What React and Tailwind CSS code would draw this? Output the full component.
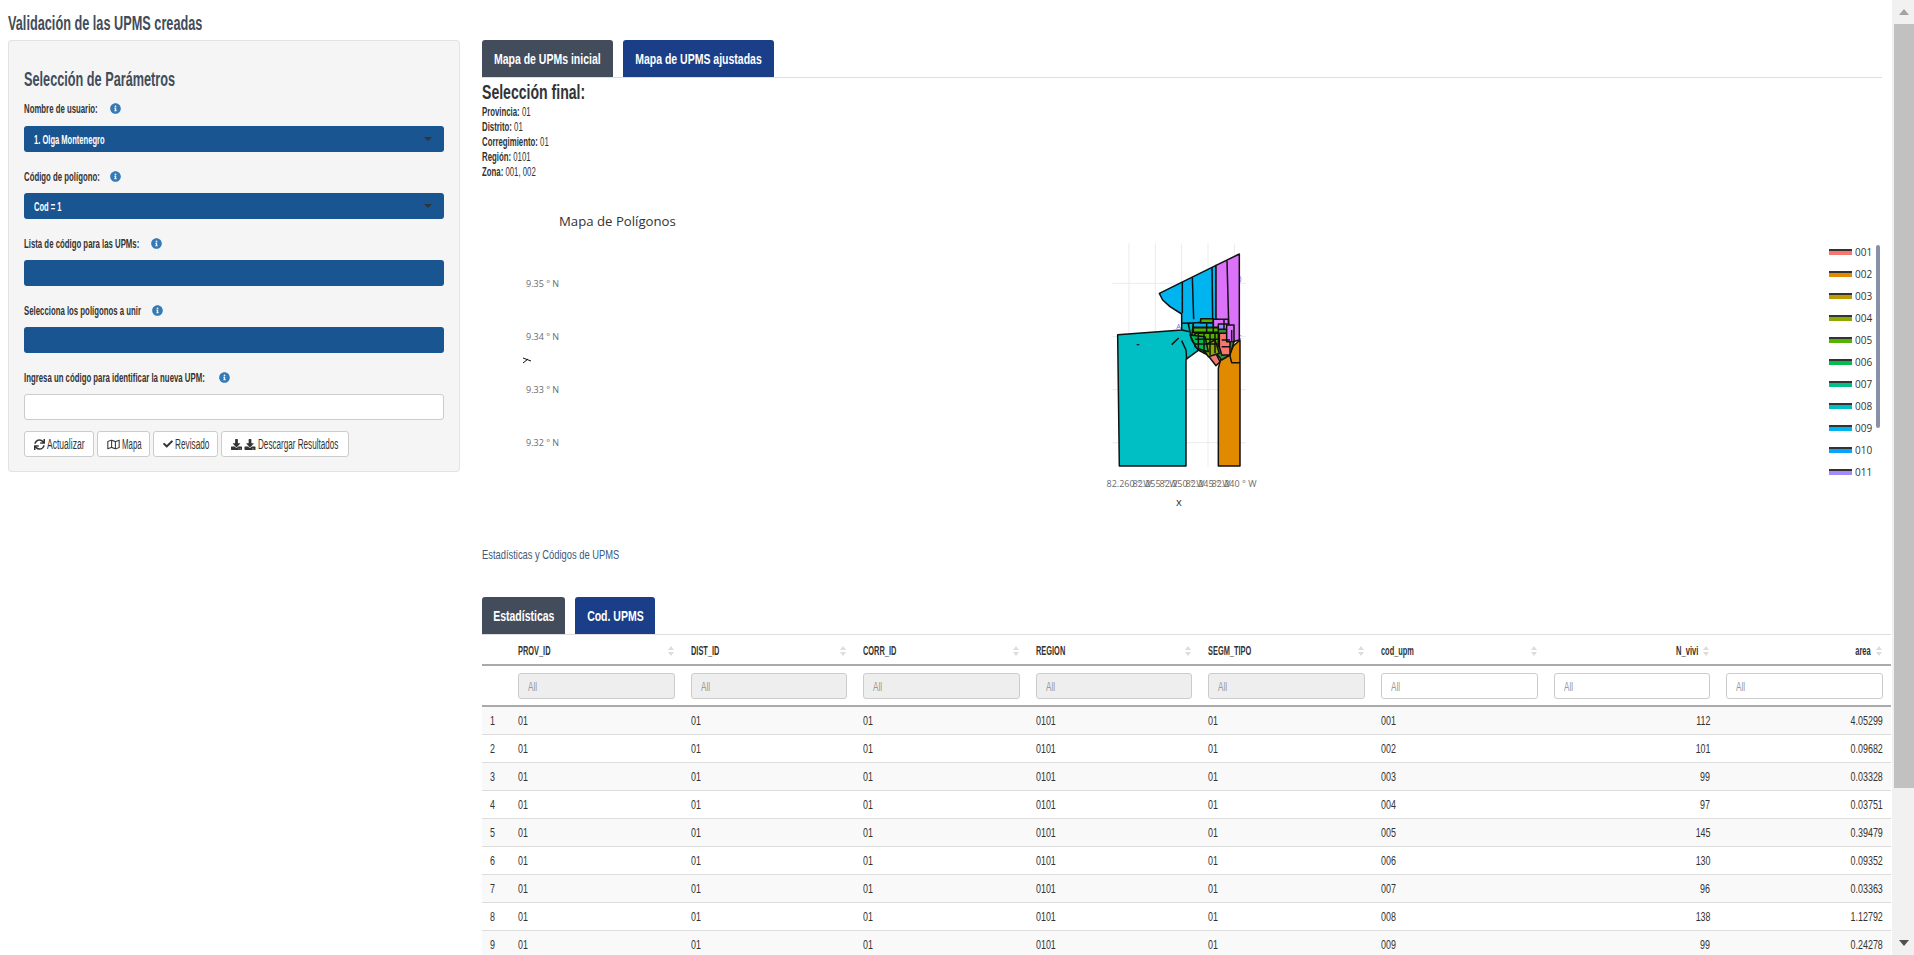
import React from 'react';
import { FaInfoCircle, FaSync, FaRegMap, FaCheck, FaDownload } from 'react-icons/fa';

const rows = [
  ['112', '4.05299'], ['101', '0.09682'], ['99', '0.03328'], ['97', '0.03751'], ['145', '0.39479'],
  ['130', '0.09352'], ['96', '0.03363'], ['138', '1.12792'], ['99', '0.24278'],
];
const columns = ['PROV_ID', 'DIST_ID', 'CORR_ID', 'REGION', 'SEGM_TIPO', 'cod_upm', 'N_vivi', 'area'];
const legend = [
  ['001', '#f8766d'], ['002', '#e18a00'], ['003', '#be9c00'], ['004', '#8cab00'], ['005', '#53b400'], ['006', '#00bb4e'],
  ['007', '#00bf87'], ['008', '#00bfc4'], ['009', '#00b4ef'], ['010', '#06a4ff'], ['011', '#a58aff'],
];
const gridCols = 'grid grid-cols-[28px_repeat(8,172.6px)]';

// la fuente del original es condensada: se comprime el texto en horizontal
const Tx = ({ children, className = '' }) => (
  <span className={`inline-block shrink-0 whitespace-nowrap ${className}`}>{children}</span>
);

const Label = ({ text, width }) => (
  <div className="flex items-center h-[15px] text-[13px] font-bold text-[#333]">
    <span className={`shrink-0 ${width}`}>
      <Tx className="origin-left scale-x-[.6]">{text}</Tx>
    </span>
    <FaInfoCircle className="text-[#337ab7] w-[11px] h-[11px]" />
  </div>
);

const SelectBox = ({ value, caret }) => (
  <div className="relative mt-[9px] h-[26px] rounded-[3px] bg-[#195591] text-white text-[12px] font-bold flex items-center pl-[10px] pt-[2px]">
    <Tx className="origin-left scale-x-[.63]">{value}</Tx>
    {caret && <span className="absolute right-[12px] top-[11px] border-x-[4px] border-t-[4px] border-x-transparent border-t-[#333]" />}
  </div>
);

const Btn = ({ children, className }) => (
  <button className={`h-[26px] shrink-0 flex items-center pl-[9px] gap-[2px] bg-white border border-[#ccc] rounded-[3px] text-[14px] text-[#333] ${className}`}>
    {children}
  </button>
);

const Tab = ({ children, active, className }) => (
  <div className={`h-[37px] flex items-center justify-center pt-[2px] rounded-t-[3px] text-[15px] font-bold text-white ${active ? 'bg-[#1a3e87]' : 'bg-[#434c5a]'} ${className}`}>
    <Tx className="scale-x-[.7]">{children}</Tx>
  </div>
);

const SortIcon = () => (
  <span className="flex flex-col gap-[2px] shrink-0">
    <span className="border-x-[3px] border-b-[4px] border-x-transparent border-b-[#ddd]" />
    <span className="border-x-[3px] border-t-[4px] border-x-transparent border-t-[#ddd]" />
  </span>
);

const PolygonMap = () => (
  <svg viewBox="482 205 1330 315" className="w-[1330px] h-[315px] shrink-0">
    <text x="559" y="226" fontSize="13.2" fill="#333" fontFamily="'Open Sans', sans-serif">Mapa de Polígonos</text>
    <g fontSize="9" fill="#6b6b6b" fontFamily="'Open Sans', sans-serif">
      <text x="526" y="287">9.35 ° N</text>
      <text x="526" y="340">9.34 ° N</text>
      <text x="526" y="393">9.33 ° N</text>
      <text x="526" y="446">9.32 ° N</text>
    </g>
    <g fontSize="9" fill="#6b6b6b" textAnchor="middle" fontFamily="'Open Sans', sans-serif">
      <text x="1129" y="487">82.260 ° W</text>
      <text x="1155" y="487">82.255 ° W</text>
      <text x="1182" y="487">82.250 ° W</text>
      <text x="1208" y="487">82.245 ° W</text>
      <text x="1234" y="487">82.240 ° W</text>
    </g>
    <text x="1176" y="506" fontSize="11" fill="#333" fontFamily="'Open Sans', sans-serif">x</text>
    <path d="M523 358 L531 361 M523 363 L528 359" stroke="#111" fill="none" />
    <g transform="translate(1080 240) scale(0.33333)">
      <g stroke="#ebebeb" strokeWidth="3">
        <path d="M147 10V682 M226 10V682 M305 10V682 M384 10V682 M463 10V682" />
        <path d="M97 130H498 M97 290H498 M97 449H498 M97 608H498" />
      </g>
      <g fontSize="22" fill="#6a6aff" fontFamily="'Open Sans', sans-serif">
        <text x="289" y="268">A</text>
        <text x="478" y="124">)</text>
        <text x="474" y="297">c</text>
      </g>
      <g stroke="#111" strokeWidth="4.5" strokeLinejoin="round">
        <path fill="#00bfc4" d="M113 284 L305 270 L305 250 H345 V290 L362 326 L318 358 L318 678 L118 678 Z" />
        <path fill="#e18a00" d="M415 385 L425 345 L450 340 L460 318 L480 300 L480 678 L415 678 Z" />
        <path fill="#00b4ef" d="M238 160 L408 76 L408 240 L350 248 L305 250 L305 222 L270 200 L248 180 Z" />
        <path fill="#dc71fa" d="M408 76 L478 42 L478 300 L458 305 L445 245 L408 238 Z" />
        <path fill="#2f8f3a" d="M340 250 H445 L462 305 L450 345 L425 360 L405 335 L383 345 L355 330 L335 290 Z" />
        <path fill="#f8766d" d="M383 345 L405 335 L420 365 L408 377 Z" />
        <path fill="none" d="M307 125V220 M337 112L341 238 M396 82L398 238 M441 62L446 248 M330 250L325 252L330 275 L335 300 L355 330 M305 270L330 275 M305 302L318 330L320 358 M275 314L296 294 M448 340L455 368H480" />
        <path fill="#00b4ef" d="M340 248H415V262H340Z" />
        <path fill="#53b400" d="M340 263H415V277H340Z" />
        <path fill="#53b400" d="M362 236H400V248H362Z" />
        <path fill="#dc71fa" d="M400 238H445V262H400Z" />
        <path fill="#a58aff" d="M415 252H445V268H415Z" />
        <path fill="#f8766d" d="M418 280H450V345H425L418 320Z" />
        <path fill="#dc71fa" d="M440 255H462V305H440Z" />
        <path fill="#53b400" d="M345 280H415V320H345Z" />
        <path fill="#8cab00" d="M365 320L405 300L418 340L385 350Z" />
        <path fill="#00bb4e" d="M330 285L375 290L385 335L350 325Z" />
        <path fill="none" d="M355 280V330 M372 280V340 M390 280V345 M405 280V340 M345 298H418 M345 312H418 M425 300H450 M425 320H450 M380 250V277 M400 250V277 M432 240V270 M455 270V305" />
      </g>
      <path d="M170 314H178" stroke="#222" strokeWidth="4" />
    </g>
  </svg>
);

const App = () => (
  <div className="flex h-[955px] overflow-hidden bg-white text-[#333] font-['Liberation_Sans',sans-serif]">
    <div className="w-[1892px] shrink-0 flex">
      {/* parametros */}
      <div className="w-[482px] shrink-0 pl-2">
        <div className="h-[40px] pt-[13px] text-[20px] leading-5 font-bold text-[#434c5a]">
          <Tx className="origin-left scale-x-[.636]">Validación de las UPMS creadas</Tx>
        </div>
        <div className="w-[452px] h-[432px] bg-[#f5f5f5] border border-[#e3e3e3] rounded-[3px] px-[15px] pt-[27px]">
          <div className="h-[23px] text-[20px] leading-[23px] font-bold text-[#434c5a]">
            <Tx className="origin-left scale-x-[.635]">Selección de Parámetros</Tx>
          </div>
          <div className="mt-[10px] pb-[1px]"><Label text="Nombre de usuario:" width="w-[86px]" /></div>
          <SelectBox value="1. Olga Montenegro" caret />
          <div className="mt-[17px]"><Label text="Código de polígono:" width="w-[86px]" /></div>
          <SelectBox value="Cod = 1" caret />
          <div className="mt-[17px]"><Label text="Lista de código para las UPMs:" width="w-[127px]" /></div>
          <SelectBox value="" />
          <div className="mt-[17px]"><Label text="Selecciona los polígonos a unir" width="w-[128px]" /></div>
          <SelectBox value="" />
          <div className="mt-[17px]"><Label text="Ingresa un código para identificar la nueva UPM:" width="w-[195px]" /></div>
          <div className="mt-[9px] h-[26px] bg-white border border-[#ccc] rounded-[3px]" />
          <div className="mt-[11px] flex gap-[3px]">
            <Btn className="w-[70px]"><FaSync className="w-[11px] h-[11px] shrink-0" /><span className="w-[38px]"><Tx className="origin-left scale-x-[.61]">Actualizar</Tx></span></Btn>
            <Btn className="w-[53px]"><FaRegMap className="w-[13px] h-[11px] shrink-0" /><span className="w-[20px]"><Tx className="origin-left scale-x-[.56]">Mapa</Tx></span></Btn>
            <Btn className="w-[65px]"><FaCheck className="w-[10px] h-[10px] shrink-0" /><span className="w-[33px]"><Tx className="origin-left scale-x-[.59]">Revisado</Tx></span></Btn>
            <Btn className="w-[128px]"><FaDownload className="w-[11px] h-[11px] shrink-0" /><FaDownload className="w-[12px] h-[11px] shrink-0" /><span className="w-[81px]"><Tx className="origin-left scale-x-[.58]">Descargar Resultados</Tx></span></Btn>
          </div>
        </div>
      </div>

      {/* mapa y tabla */}
      <div className="w-[1409px] shrink-0">
        <div className="pt-[40px] flex gap-[10px] border-b border-[#ddd] mr-[9px]">
          <Tab className="w-[131px]">Mapa de UPMs inicial</Tab>
          <Tab active className="w-[151px]">Mapa de UPMS ajustadas</Tab>
        </div>
        <div className="h-[27px] pt-[2px] text-[21px] leading-6 font-bold text-[#333]">
          <Tx className="origin-left scale-x-[.67]">Selección final:</Tx>
        </div>
        <div className="text-[12px] leading-[15px] text-[#333]">
          <div><Tx className="origin-left scale-x-[.65]"><b>Provincia:</b> 01</Tx></div>
          <div><Tx className="origin-left scale-x-[.65]"><b>Distrito:</b> 01</Tx></div>
          <div><Tx className="origin-left scale-x-[.65]"><b>Corregimiento:</b> 01</Tx></div>
          <div><Tx className="origin-left scale-x-[.65]"><b>Región:</b> 0101</Tx></div>
          <div><Tx className="origin-left scale-x-[.65]"><b>Zona:</b> 001, 002</Tx></div>
        </div>
        <div className="flex mt-[25px] h-[315px]">
          <PolygonMap />
          <div className="ml-[17px] w-[55px] relative pt-[36px] font-['Open_Sans',sans-serif]">
            {legend.map(([code, color]) => (
              <div key={code} className="h-[22px] flex items-center gap-[3px] text-[10px] text-[#333]">
                <span className="w-[23px] flex flex-col">
                  <span className="h-[2px] bg-[#333]" />
                  <span className="h-[4px]" style={{ backgroundColor: color }} />
                </span>
                {code}
              </div>
            ))}
            <span className="absolute right-[4px] top-[40px] w-[4px] h-[183px] rounded-sm bg-[#8a90a8]" />
          </div>
        </div>
        <div className="mt-[27px] h-[15px] text-[13px] leading-[15px] text-[#3c5a80]">
          <Tx className="origin-left scale-x-[.72]">Estadísticas y Códigos de UPMS</Tx>
        </div>
        <div className="mt-[35px] flex gap-[10px] border-b border-[#ddd]">
          <Tab className="w-[83px]">Estadísticas</Tab>
          <Tab active className="w-[80px]">Cod. UPMS</Tab>
        </div>
        <div className={`${gridCols} h-[31px] pt-[2px] border-b-2 border-[#aaa] text-[13px] font-bold text-[#333]`}>
          <div />
          {columns.map((c, i) => (
            i > 5 ? (
              <div key={c} className="flex items-center justify-end gap-[5px] pr-[9px]">
                <Tx className="origin-right scale-x-[.58]">{c}</Tx>
                <SortIcon />
              </div>
            ) : (
              <div key={c} className="flex items-center justify-between pl-2 pr-[9px]">
                <Tx className="origin-left scale-x-[.57]">{c}</Tx>
                <SortIcon />
              </div>
            )
          ))}
        </div>
        <div className={`${gridCols} h-[41px] border-b-2 border-[#aaa] items-center`}>
          <div />
          {columns.map((c, i) => (
            <div key={c} className="px-2">
              <div className={`h-[26px] flex items-center pl-[9px] pt-[2px] rounded-[3px] border border-[#ccc] text-[13px] text-[#999] ${i < 5 ? 'bg-[#eee]' : 'bg-white'}`}>
                <Tx className="origin-left scale-x-[.63]">All</Tx>
              </div>
            </div>
          ))}
        </div>
        {rows.map(([viv, area], r) => (
          <div key={r} className={`${gridCols} h-[28px] pt-[2px] items-center border-b border-[#ddd] text-[13.5px] text-[#333] ${r % 2 === 0 ? 'bg-[#f9f9f9]' : 'bg-white'}`}>
            <div className="pl-2"><Tx className="origin-left scale-x-[.66]">{r + 1}</Tx></div>
            {['01', '01', '01', '0101', '01', `00${r + 1}`].map((val, c) => (
              <div key={c} className="px-2"><Tx className="origin-left scale-x-[.66]">{val}</Tx></div>
            ))}
            <div className="px-2 text-right"><Tx className="origin-right scale-x-[.66]">{viv}</Tx></div>
            <div className="px-2 text-right"><Tx className="origin-right scale-x-[.66]">{area}</Tx></div>
          </div>
        ))}
      </div>
    </div>

    {/* barra de scroll */}
    <div className="w-[22px] shrink-0 bg-[#f1f1f1] flex flex-col">
      <div className="h-[24px] flex items-center justify-center pl-[2px]">
        <span className="border-x-[5px] border-b-[6px] border-x-transparent border-b-[#a3a3a3]" />
      </div>
      <div className="ml-[2px] h-[764px] bg-[#c1c1c1]" />
      <div className="flex-1" />
      <div className="h-[24px] flex items-center justify-center pl-[2px]">
        <span className="border-x-[5px] border-t-[6px] border-x-transparent border-t-[#505050]" />
      </div>
    </div>
  </div>
);

export default App;
